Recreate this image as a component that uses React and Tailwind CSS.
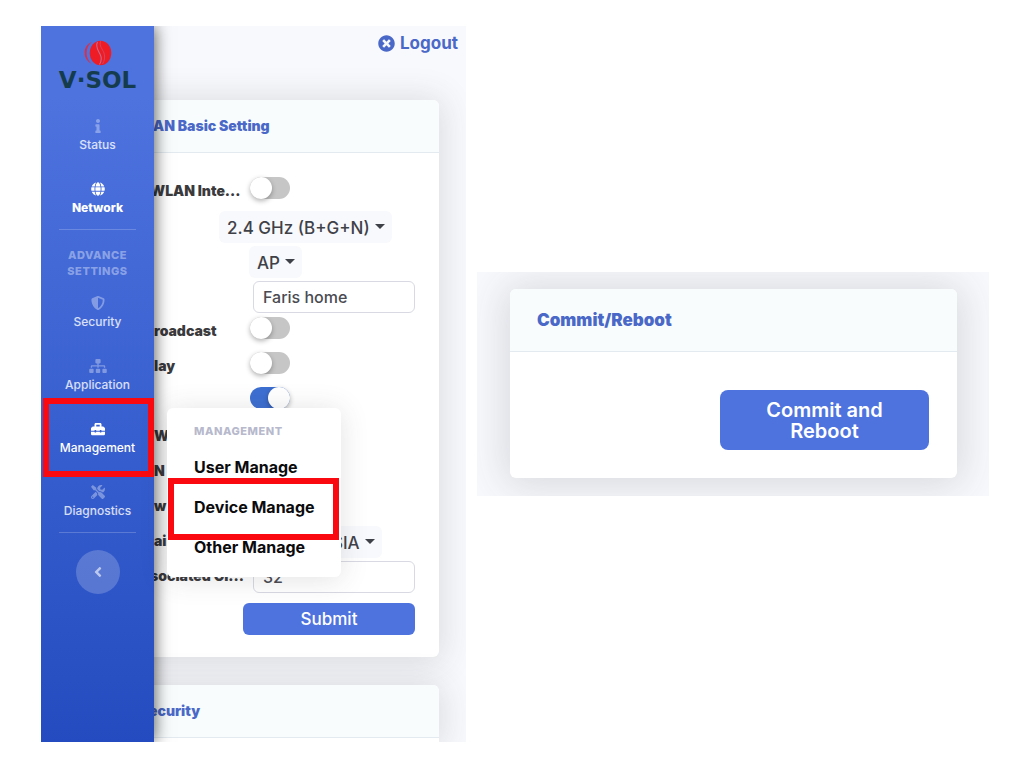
import { FaAngleLeft, FaGlobe, FaInfo, FaShieldAlt, FaSitemap, FaTimesCircle, FaToolbox, FaTools } from 'react-icons/fa';

const CARD_SHADOW = 'shadow-[0_2px_32px_4px_rgba(58,59,69,0.15)]';

const MENU = ['User Manage', 'Device Manage', 'Other Manage'];

export default function App() {
  return (
    <div className="min-h-screen bg-white font-['Inter',sans-serif] flex items-center pl-[41px] pr-[35px]">
      <div className="w-full grid grid-cols-[425fr_512fr] gap-[11px] items-center">
        <RouterPanel />
        <RebootPanel />
      </div>
    </div>
  );
}

function RouterPanel() {
  return (
    <section className="flex overflow-hidden bg-[#f8f9fc]">
      <Sidebar />

      {/* the content slides under the sidebar */}
      <main className="flex-1 min-w-0 -ml-[87px] pr-[27px]">
        <div className="h-[74px] pt-1.5 -mr-[19px] flex items-start justify-end">
          <a href="#logout" className="flex items-center gap-[5px] text-[17px] leading-[22px] font-bold text-[#4a68c8]">
            <FaTimesCircle className="size-[17px]" />
            Logout
          </a>
        </div>

        <form
          className={`bg-white rounded-md ${CARD_SHADOW}`}
          onSubmit={e => e.preventDefault()}
        >
          <CardHeader>AN Basic Setting</CardHeader>
          <div className="pl-[87px] pr-6 py-[22px]">
            <Row id="wlan" label="WLAN Inte..." cut><Toggle id="wlan" /></Row>
            <Row><Select name="Band" value="2.4 GHz (B+G+N)" className="ml-[65px]" /></Row>
            <Row><Select name="Mode" value="AP" className="ml-[95px]" /></Row>
            <Row><TextBox id="ssid" name="SSID" value="Faris home" /></Row>
            <Row id="broadcast" label="roadcast"><Toggle id="broadcast" /></Row>
            <Row id="relay" label="lay"><Toggle id="relay" /></Row>
            <Row><div className="w-24" /><Toggle id="enabled" name="Enabled" on /></Row>
            <Row label="W" />
            <Row label="N" />
            <Row label="w" />
            <Row label="ain"><Select name="Domain" value="SIA" className="ml-auto mr-[33px]" /></Row>
            <Row id="clients" label="sociated Cl..." cut><TextBox id="clients" value="32" /></Row>
            <button
              type="submit"
              className="block mt-2 ml-auto w-[172px] h-8 pt-px rounded-md bg-[#4e73df] text-white text-[17px] font-medium"
            >
              Submit
            </button>
          </div>
        </form>

        <div className={`mt-7 bg-white rounded-t-md ${CARD_SHADOW}`}>
          <CardHeader cut>ecurity</CardHeader>
          <div className="h-1" />
        </div>
      </main>
    </section>
  );
}

function CardHeader({ children, cut }) {
  return (
    <div className="h-[53px] pl-[86px] flex items-center rounded-t-md bg-[#f8fcfc] border-b border-[#e3ebf0]">
      <h2 className={`text-[14px] leading-5 font-black text-[#4a68c8] ${cut ? '-ml-1' : ''}`}>{children}</h2>
    </div>
  );
}

function Row({ id, label, cut, children }) {
  return (
    <div className="h-[35px] flex items-start">
      {label && (
        <label
          htmlFor={id}
          className={`pt-1.5 text-[14px] leading-5 font-black text-[#3a3a3d] whitespace-nowrap ${cut ? '-ml-1 w-[100px]' : 'w-24'}`}
        >
          {label}
        </label>
      )}
      {children}
    </div>
  );
}

function Toggle({ id, name, on }) {
  return (
    <span className="relative mt-0.5 w-10 h-[22px]">
      <input
        id={id} type="checkbox" defaultChecked={on} aria-label={name}
        className="peer block appearance-none w-10 h-[22px] rounded-full bg-[#c6c6c6] checked:bg-[#3d6fd2]"
      />
      <span className="pointer-events-none absolute top-0 left-0 size-[22px] rounded-full bg-white shadow-[0_2px_5px_rgba(0,0,0,0.3)] peer-checked:left-[18px]" />
    </span>
  );
}

function Select({ name, value, className }) {
  return (
    <span className={`relative mt-px ${className}`}>
      <select
        aria-label={name}
        className="block appearance-none h-8 pt-px pl-2 pr-[22px] rounded-md bg-[#f8f9fc] text-[17px] leading-6 font-medium text-[#3f4148]"
      >
        <option>{value}</option>
      </select>
      <svg viewBox="0 0 10 5" className="pointer-events-none absolute right-[7px] top-[13px] w-2.5 h-[5px] fill-[#3f4148]">
        <path d="M0 0h10L5 5z" />
      </svg>
    </span>
  );
}

function TextBox({ id, name, value }) {
  return (
    <input
      id={id} type="text" defaultValue={value} aria-label={name}
      className="mt-px ml-auto w-[162px] h-8 px-[9px] rounded-md border border-[#d8d9e2] bg-transparent text-base font-medium text-[#4a4b52]"
    />
  );
}

function Sidebar() {
  return (
    <nav className="relative z-10 w-[113px] shrink-0 bg-linear-to-b from-[#4e73df] from-10% to-[#244cc0] text-center shadow-[0_0_16px_rgba(0,0,0,0.7)]">
      <a href="#home" className="h-[77px] pt-3.5 flex flex-col items-center">
        <LogoMark />
        <span className="text-[23px] leading-[28px] font-bold text-[#153c4c] font-['DejaVu_Sans',sans-serif]">V·SOL</span>
      </a>

      <ul>
        <NavItem icon={FaInfo} label="Status" />
        <NavItem icon={FaGlobe} label="Network" current />
      </ul>

      <hr className="mx-[18px] border-white/20" />
      <p className="pt-[17px] pb-px text-[11px] leading-4 font-extrabold tracking-wider text-white/40">
        ADVANCE<br />SETTINGS
      </p>

      <ul>
        <NavItem icon={FaShieldAlt} label="Security" />
        <NavItem icon={FaSitemap} label="Application" />
        <NavItem icon={FaToolbox} label="Management" open>
          <span className="pointer-events-none absolute -inset-y-2 left-0.5 right-0 border-[6px] border-[#fa0a10]" />
          <Flyout />
        </NavItem>
        <NavItem icon={FaTools} label="Diagnostics" />
      </ul>

      <hr className="mx-[18px] mb-[17px] border-white/20" />
      <button
        type="button" aria-label="Collapse"
        className="size-11 rounded-full inline-flex items-center justify-center bg-white/20 text-white/60"
      >
        <FaAngleLeft className="size-4" />
      </button>
    </nav>
  );
}

function NavItem({ icon: Icon, label, current, open, children }) {
  return (
    <li className="relative">
      <a
        href="#nav"
        className={`pt-4 pb-[13px] flex flex-col items-center gap-1 text-[12px] leading-4 ${
          current ? 'font-extrabold text-white' : open ? 'font-medium text-white' : 'font-medium text-white/80'
        }`}
      >
        <Icon className={`h-3.5 w-[18px] ${current || open ? 'text-white' : 'text-white/35'}`} />
        {label}
      </a>
      {children}
    </li>
  );
}

function Flyout() {
  return (
    <div className="absolute left-[126px] top-0.5 w-[174px] pt-[15px] pb-2.5 rounded-md bg-white text-left shadow-[0_2px_28px_rgba(58,59,69,0.15)]">
      <h3 className="mb-2 pl-[27px] text-[11px] leading-4 font-extrabold tracking-wider text-[#b7b9cc]">MANAGEMENT</h3>
      <ul>
        {MENU.map(item => (
          <li key={item} className="relative">
            <a href="#menu" className="block pl-[27px] text-[16px] leading-10 font-bold text-[#0b0b0d] whitespace-nowrap">
              {item}
            </a>
            {item === 'Device Manage' && (
              <span className="pointer-events-none absolute -top-[9px] -bottom-[13px] left-px right-0.5 border-[6px] border-[#fa0a10]" />
            )}
          </li>
        ))}
      </ul>
    </div>
  );
}

function RebootPanel() {
  return (
    <section className="pl-[33px] pr-8 pt-[17px] pb-[18px] overflow-hidden bg-[#f8f9fc]">
      <div className="rounded-md bg-white shadow-[0_2px_40px_6px_rgba(58,59,69,0.16)]">
        <div className="h-[63px] pl-[27px] flex items-center rounded-t-md bg-[#f8fcfc] border-b border-[#e3ebf0]">
          <h2 className="text-[17px] leading-6 font-black text-[#4a68c8]">Commit/Reboot</h2>
        </div>
        <div className="pt-[38px] pb-7 pr-7 flex justify-end">
          <button type="button" className="w-[209px] h-[60px] px-10 pt-px rounded-lg bg-[#4e73df] text-white text-[20px] leading-[21px] font-semibold">
            Commit and Reboot
          </button>
        </div>
      </div>
    </section>
  );
}

function LogoMark() {
  return (
    <svg viewBox="0 0 28 26" className="w-7 h-[26px]">
      <ellipse cx="16.500" cy="13" rx="10.800" ry="12.200" fill="#ee1c25" />
      <path fill="none" stroke="#c76a8f" strokeWidth="1.100" d="M13.500 2C11 6.500 14 10 16 14C18 18 17.500 21.500 15.500 24.500" />
      <path fill="none" stroke="#d04a68" strokeWidth=".9" d="M16.500 1.200C15 6 18.500 9 20 13C21.300 17 20.500 21 18.500 24" />
      <path fill="#d8304a" d="M8 1.800C3 4 .6 8 .6 12.800C.6 17.500 3 21.500 8 24.200C4.500 21 2.600 17.500 2.600 13C2.600 8.500 4.500 4.800 8 1.800Z" />
    </svg>
  );
}
